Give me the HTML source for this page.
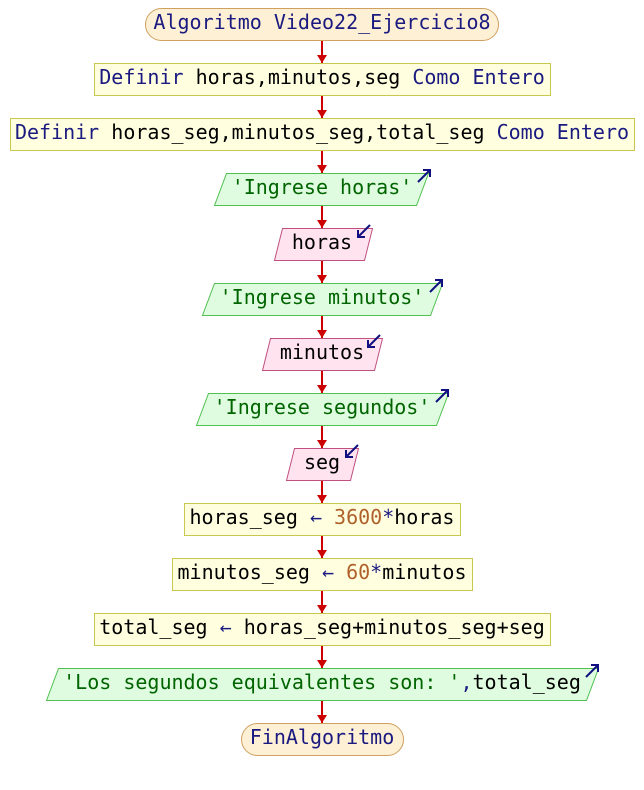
<!DOCTYPE html>
<html><head><meta charset="utf-8"><style>
html,body{margin:0;padding:0;background:#fff;}
svg{display:block;}
text{font-family:"DejaVu Sans Mono","Liberation Mono",monospace;font-size:20px;}
.k{fill:#1a1a80}.s{fill:#006400}.v{fill:#000}.n{fill:#b0602a}
</style></head><body>
<svg width="644" height="790" viewBox="0 0 644 790" xmlns="http://www.w3.org/2000/svg">
<defs>
<marker id="ah" markerWidth="10" markerHeight="10" refX="5" refY="8" orient="0" markerUnits="userSpaceOnUse">
<path d="M0,0 L10,0 L5,8 Z" fill="#cc0000"/></marker>
</defs>
<g stroke="#cc0000" stroke-width="2" fill="none">
<line x1="322" y1="40" x2="322" y2="63" marker-end="url(#ah)"/>
<line x1="322" y1="95" x2="322" y2="118" marker-end="url(#ah)"/>
<line x1="322" y1="150" x2="322" y2="173" marker-end="url(#ah)"/>
<line x1="322" y1="205" x2="322" y2="228" marker-end="url(#ah)"/>
<line x1="322" y1="260" x2="322" y2="283" marker-end="url(#ah)"/>
<line x1="322" y1="315" x2="322" y2="338" marker-end="url(#ah)"/>
<line x1="322" y1="370" x2="322" y2="393" marker-end="url(#ah)"/>
<line x1="322" y1="425" x2="322" y2="448" marker-end="url(#ah)"/>
<line x1="322" y1="480" x2="322" y2="503" marker-end="url(#ah)"/>
<line x1="322" y1="535" x2="322" y2="558" marker-end="url(#ah)"/>
<line x1="322" y1="590" x2="322" y2="613" marker-end="url(#ah)"/>
<line x1="322" y1="645" x2="322" y2="668" marker-end="url(#ah)"/>
<line x1="322" y1="700" x2="322" y2="723" marker-end="url(#ah)"/>
</g>
<rect x="145.5" y="8.5" width="353" height="32" rx="16" fill="#fdf0d4" stroke="#d0a060"/>
<text x="322" y="29" text-anchor="middle" class="k">Algoritmo Video22_Ejercicio8</text>
<rect x="94.5" y="63.5" width="456" height="32" fill="#ffffe0" stroke="#c8c850"/>
<text x="322" y="84" text-anchor="middle"><tspan class="k">Definir</tspan><tspan class="v"> horas,minutos,seg </tspan><tspan class="k">Como Entero</tspan></text>
<rect x="10.5" y="118.5" width="624" height="32" fill="#ffffe0" stroke="#c8c850"/>
<text x="322" y="139" text-anchor="middle"><tspan class="k">Definir</tspan><tspan class="v"> horas_seg,minutos_seg,total_seg </tspan><tspan class="k">Como Entero</tspan></text>
<g fill="#e0fce0" stroke="#50c050">
<polygon points="226.5,173.5 428.5,173.5 416.5,205.5 214.5,205.5"/>
<polygon points="214.5,283.5 442.5,283.5 430.5,315.5 202.5,315.5"/>
<polygon points="208.5,393.5 448.5,393.5 436.5,425.5 196.5,425.5"/>
<polygon points="58.5,668.5 598.5,668.5 586.5,700.5 46.5,700.5"/>
</g>
<g fill="#ffe4f0" stroke="#c05080">
<polygon points="282.5,228.5 372.5,228.5 364.5,260.5 274.5,260.5"/>
<polygon points="270.5,338.5 382.5,338.5 374.5,370.5 262.5,370.5"/>
<polygon points="294.5,448.5 358.5,448.5 350.5,480.5 286.5,480.5"/>
</g>
<text x="322" y="194" text-anchor="middle" class="s">'Ingrese horas'</text>
<text x="322" y="304" text-anchor="middle" class="s">'Ingrese minutos'</text>
<text x="322" y="414" text-anchor="middle" class="s">'Ingrese segundos'</text>
<text x="322" y="689" text-anchor="middle"><tspan class="s">'Los segundos equivalentes son: '</tspan><tspan class="k">,</tspan><tspan class="v">total_seg</tspan></text>
<text x="322" y="249" text-anchor="middle" class="v">horas</text>
<text x="322" y="359" text-anchor="middle" class="v">minutos</text>
<text x="322" y="469" text-anchor="middle" class="v">seg</text>
<g stroke="#101080" stroke-width="2" fill="none">
<path d="M418,182 L430,170 M423,170 L430,170 L430,177"/>
<path d="M430,292 L442,280 M435,280 L442,280 L442,287"/>
<path d="M436,402 L448,390 M441,390 L448,390 L448,397"/>
<path d="M586,677 L598,665 M591,665 L598,665 L598,672"/>
<path d="M370,225 L358,237 M358,230 L358,237 L365,237"/>
<path d="M380,335 L368,347 M368,340 L368,347 L375,347"/>
<path d="M358,445 L346,457 M346,450 L346,457 L353,457"/>
</g>
<rect x="184.5" y="503.5" width="276" height="32" fill="#ffffe0" stroke="#c8c850"/>
<text x="322" y="524" text-anchor="middle"><tspan class="v">horas_seg </tspan><tspan class="k">←</tspan><tspan class="n"> 3600</tspan><tspan class="k">*</tspan><tspan class="v">horas</tspan></text>
<rect x="172.5" y="558.5" width="300" height="32" fill="#ffffe0" stroke="#c8c850"/>
<text x="322" y="579" text-anchor="middle"><tspan class="v">minutos_seg </tspan><tspan class="k">←</tspan><tspan class="n"> 60</tspan><tspan class="k">*</tspan><tspan class="v">minutos</tspan></text>
<rect x="94.5" y="613.5" width="456" height="32" fill="#ffffe0" stroke="#c8c850"/>
<text x="322" y="634" text-anchor="middle"><tspan class="v">total_seg </tspan><tspan class="k">←</tspan><tspan class="v"> horas_seg+minutos_seg+seg</tspan></text>
<rect x="241.5" y="723.5" width="162" height="32" rx="16" fill="#fdf0d4" stroke="#d0a060"/>
<text x="322" y="744" text-anchor="middle" class="k">FinAlgoritmo</text>
</svg>
</body></html>
